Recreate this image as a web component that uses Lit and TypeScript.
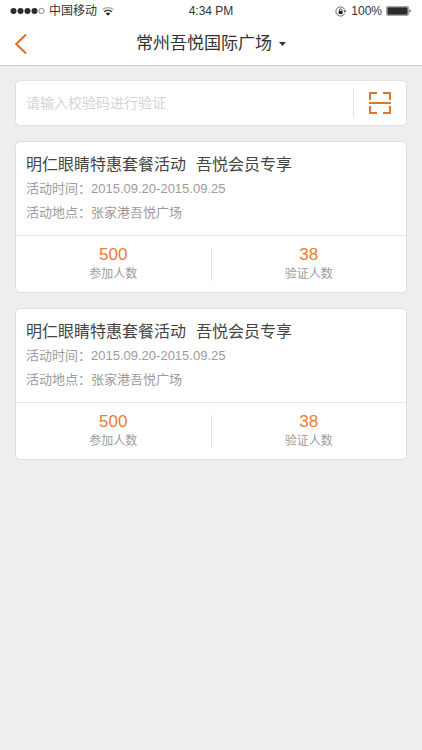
import { LitElement, html, css, svg } from "lit";
import { customElement, property } from "lit/decorators.js";

interface Activity {
  title: string;
  audience: string;
  time: string;
  place: string;
  joined: number;
  verified: number;
}

const activity: Activity = {
  title: "明仁眼睛特惠套餐活动",
  audience: "吾悦会员专享",
  time: "2015.09.20-2015.09.25",
  place: "张家港吾悦广场",
  joined: 500,
  verified: 38,
};

@customElement("status-bar")
class StatusBar extends LitElement {
  static styles = css`
    :host {
      display: grid;
      grid-template-columns: 1fr auto 1fr;
      align-items: center;
      height: 22px;
      padding: 0 10px;
      font-size: 12px;
      line-height: 20px;
      color: #333;
    }
    .side {
      display: flex;
      align-items: center;
      gap: 4px;
    }
    .end {
      justify-content: flex-end;
    }
    svg {
      display: block;
      flex: none;
    }
  `;

  render() {
    return html`
      <div class="side">
        <svg width="35" height="8" viewBox="0 0 35 8" aria-hidden="true">
          ${[3.5, 10.5, 17.5, 24.5].map(
            (x) => svg`<circle cx=${x} cy="4" r="3" fill="#2b2b2b" />`
          )}
          <circle cx="31.5" cy="4" r="2.6" fill="none" stroke="#555" stroke-width=".7" />
        </svg>
        <span>中国移动</span>
        <svg width="14" height="10" viewBox="0 0 14 10" aria-hidden="true">
          <path d="M1.6 3.7a7.8 7.8 0 0 1 10.8 0" fill="none" stroke="#aaa" stroke-width="1.2" />
          <path d="M3.2 5.8a5.6 5.6 0 0 1 7.6 0" fill="none" stroke="#333" stroke-width="1.5" />
          <path d="M4.8 7.4a3.3 3.3 0 0 1 4.4 0L7 9.7z" fill="#222" />
        </svg>
      </div>
      <span>4:34 PM</span>
      <div class="side end">
        <svg width="12" height="11" viewBox="0 0 12 11" aria-hidden="true">
          <path d="M9.6 7.6A4.6 4.6 0 1 1 9.7 3.6" fill="none" stroke="#555" stroke-width=".9" />
          <path d="M8.3 4.6h3.2L9.9 6.8z" fill="#444" />
          <rect x="3.6" y="5" width="4" height="3" fill="#222" />
          <path d="M4.4 5V4a1.2 1.2 0 0 1 2.4 0v1" fill="none" stroke="#222" stroke-width=".8" />
        </svg>
        <span>100%</span>
        <svg width="26" height="10" viewBox="0 0 26 10" aria-hidden="true">
          <rect x=".4" y=".4" width="22.2" height="9.2" rx="1.4" fill="#fff" stroke="#777" stroke-width=".7" />
          <rect x="1.3" y="1.3" width="20.4" height="7.4" rx=".6" fill="#2b2b2b" />
          <path d="M23.5 3.2a2 2 0 0 1 0 3.6z" fill="#333" />
        </svg>
      </div>
    `;
  }
}

@customElement("activity-card")
class ActivityCard extends LitElement {
  @property({ attribute: false }) data!: Activity;

  static styles = css`
    :host {
      display: block;
      box-sizing: border-box;
      background: #fff;
      border: 1px solid #e0e0e0;
      border-radius: 5px;
      color: #9c9c9c;
    }
    .info {
      padding: 11px 10px 10px;
    }
    .title {
      display: flex;
      gap: 10px;
      margin: 0;
      font-size: 16px;
      font-weight: 400;
      line-height: 24px;
      color: #444;
    }
    .meta {
      margin: 0;
      font-size: 13px;
      line-height: 24px;
    }
    .stats {
      display: flex;
      margin: 0;
      padding: 12px 0 11px;
      border-top: 1px solid #e3e3e3;
      text-align: center;
    }
    .stat {
      flex: 1;
      display: flex;
      flex-direction: column-reverse;
      gap: 6px;
    }
    .stat + .stat {
      border-left: 1px solid #e6e6e6;
    }
    .label {
      font-size: 12px;
      line-height: 14px;
    }
    .value {
      margin: 0;
      font-size: 17px;
      line-height: 13px;
      color: #e87c32;
    }
  `;

  render() {
    const d = this.data;
    return html`
      <div class="info">
        <h2 class="title"><span>${d.title}</span><span>${d.audience}</span></h2>
        <p class="meta">活动时间：${d.time}</p>
        <p class="meta">活动地点：${d.place}</p>
      </div>
      <dl class="stats">
        <div class="stat">
          <dt class="label">参加人数</dt>
          <dd class="value">${d.joined}</dd>
        </div>
        <div class="stat">
          <dt class="label">验证人数</dt>
          <dd class="value">${d.verified}</dd>
        </div>
      </dl>
    `;
  }
}

@customElement("app-root")
class AppRoot extends LitElement {
  static styles = css`
    :host {
      display: block;
      min-height: 100vh;
      background: #eee;
      font-family: "Liberation Sans", "Noto Sans CJK SC", sans-serif;
    }
    button {
      padding: 0;
      border: 0;
      background: none;
      font: inherit;
      color: inherit;
      cursor: pointer;
    }
    svg {
      display: block;
    }
    .top {
      background: #fff;
      border-bottom: 1px solid #ccc;
    }
    .nav {
      display: grid;
      grid-template-columns: 44px 1fr 44px;
      align-items: center;
      height: 43px;
    }
    .back {
      padding: 10px 14px;
    }
    .heading {
      margin: 0;
      font-size: 17px;
      font-weight: 400;
      line-height: 24px;
      color: #333;
      text-align: center;
    }
    .venue {
      display: inline-flex;
      align-items: center;
      gap: 7px;
    }
    .content {
      display: flex;
      flex-direction: column;
      gap: 15px;
      padding: 14px 15px;
    }
    .search {
      display: flex;
      align-items: center;
      box-sizing: border-box;
      height: 46px;
      background: #fff;
      border: 1px solid #e0e0e0;
      border-radius: 5px;
    }
    .code {
      flex: 1;
      min-width: 0;
      padding: 0 10px;
      border: 0;
      outline: 0;
      background: none;
      font: inherit;
      font-size: 14px;
      line-height: 30px;
      color: #444;
    }
    .code::placeholder {
      color: #d4d4d4;
      opacity: 1;
    }
    .scan {
      padding: 3px 14px;
      border-left: 1px solid #e3e3e3;
    }
  `;

  render() {
    return html`
      <header class="top">
        <status-bar></status-bar>
        <nav class="nav">
          <button class="back" aria-label="返回">
            <svg width="14" height="22" viewBox="0 0 14 22" fill="none" stroke="#e0701a" stroke-width="2">
              <path d="M12 1.5 2.3 11 12 20.5" />
            </svg>
          </button>
          <h1 class="heading">
            <button class="venue">
              常州吾悦国际广场
              <svg width="7" height="4" viewBox="0 0 7 4" aria-hidden="true">
                <path d="M0 0h7L3.5 4z" fill="#333" />
              </svg>
            </button>
          </h1>
        </nav>
      </header>
      <main class="content">
        <form class="search" @submit=${(e: Event) => e.preventDefault()}>
          <input class="code" type="text" aria-label="校验码" placeholder="请输入校验码进行验证" />
          <button class="scan" type="button" aria-label="扫一扫">
            <svg width="24" height="24" viewBox="0 0 24 24" fill="none" stroke="#e0752a" stroke-width="2">
              <path d="M9 2H2v7M15 2h7v7M2 15v7h7M22 15v7h-7M1 12h22" />
            </svg>
          </button>
        </form>
        <activity-card .data=${activity}></activity-card>
        <activity-card .data=${activity}></activity-card>
      </main>
    `;
  }
}
